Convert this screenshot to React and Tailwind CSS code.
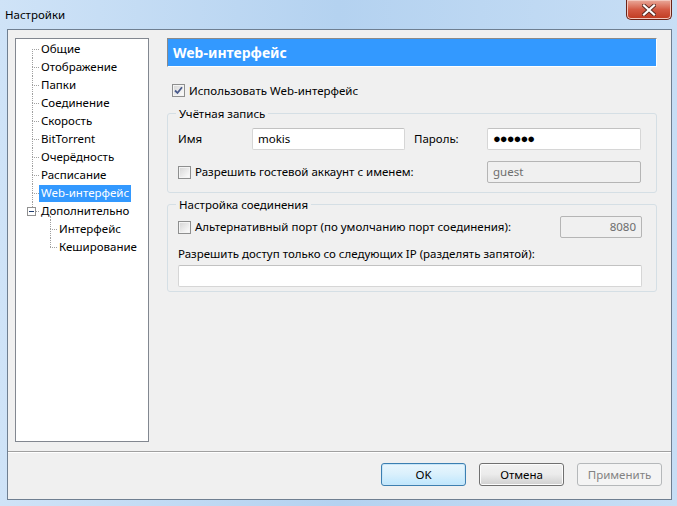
import React from "react";

const FONT = { fontFamily: '"Noto Sans", "Open Sans", sans-serif' };

function CheckBox({ checked }) {
  return (
    <div className="w-[13px] h-[13px] border border-[#8e8f8f] bg-[#f4f4f4] p-[1px] shrink-0">
      <div className="w-full h-full bg-gradient-to-br from-[#d8d8d8] to-[#fbfbfb] flex items-center justify-center">
        {checked && (
          <svg width="9" height="9" viewBox="0 0 9 9">
            <path d="M1 4.5 L3.5 7 L8 1.2" fill="none" stroke="#4a5b8c" strokeWidth="1.8" />
          </svg>
        )}
      </div>
    </div>
  );
}

function TextInput({ value, disabled, right, className = "", password }) {
  return (
    <div
      className={
        "h-[22px] border rounded-[2px] flex items-center px-[5px] text-[11.5px] " +
        (disabled
          ? "bg-[#f0f0f0] border-[#b5b5b5] text-[#6d6d6d] "
          : "bg-white border-[#d6d6d6] border-t-[#c2c2c2] text-black ") +
        (right ? "justify-end " : "") +
        className
      }
    >
      {password ? <span className="tracking-[-1px] text-[13px]">●●●●●●</span> : value}
    </div>
  );
}

function Button({ children, kind }) {
  const cls =
    kind === "default"
      ? "border-[#3c7fb1] bg-gradient-to-b from-[#eaf6fd] via-[#d9f0fc] to-[#bee6fd] text-black shadow-[0_0_0_1px_#c8e6f8_inset]"
      : kind === "disabled"
      ? "border-[#b5b8ba] bg-[#f4f4f4] text-[#838383]"
      : "border-[#707070] bg-gradient-to-b from-[#f2f2f2] via-[#ebebeb] to-[#cfcfcf] text-black shadow-[0_0_0_1px_#fcfcfc_inset]";
  return (
    <div className={"w-[85px] h-[23px] border rounded-[3px] flex items-center justify-center text-[11.5px] " + cls}>
      {children}
    </div>
  );
}

const dot = "border-[#a0a0a0] border-dotted";

function TreeRow({ label, level = 0, first, last, selected, expander }) {
  return (
    <div className="flex h-[18px] items-center">
      <div className={level === 0 ? "w-[16px] shrink-0" : "w-[34px] shrink-0"} />
      <div className="relative w-[7px] h-[18px] shrink-0">
        {!first && <div className={"absolute left-0 top-0 h-[9px] border-l " + dot} />}
        {!expander && !last && <div className={"absolute left-0 top-[9px] h-[9px] border-l " + dot} />}
        <div className={"absolute left-0 top-[9px] w-[7px] border-t " + dot} />
        {expander && (
          <div className="absolute left-[-5px] top-[5px] w-[9px] h-[9px] border border-[#919191] bg-white flex items-center justify-center">
            <div className="w-[5px] h-[1px] bg-[#1e3c6e]" />
          </div>
        )}
        {expander && <div className={"absolute left-[18px] top-[14px] h-[4px] border-l " + dot} />}
      </div>
      <div
        className={
          "px-[2px] h-[17px] flex items-center text-[11.5px] whitespace-nowrap " +
          (selected ? "bg-[#3399ff] text-white" : "text-black")
        }
      >
        {label}
      </div>
    </div>
  );
}

export default function App() {
  return (
    <div
      style={FONT}
      className="w-[677px] h-[506px] flex flex-col bg-gradient-to-r from-[#cfe3f7] via-[#b4d2f0] to-[#c7def5] overflow-hidden"
    >
      {/* Title bar */}
      <div className="h-[29px] flex items-start justify-between shrink-0">
        <div className="pl-[5px] pt-[6px] text-[11.5px] text-black leading-[18px]">Настройки</div>
        <div className="mr-[5px] w-[46px] h-[20px] rounded-b-[5px] border border-t-0 border-[#6b2418] bg-gradient-to-b from-[#e9a99b] via-[#d45a44] to-[#c0391f] flex items-center justify-center shadow-[0_0_0_1px_#f3c7bd_inset]">
          <svg width="14" height="12" viewBox="0 0 14 12">
            <path d="M2 1.5 L12 10.5 M12 1.5 L2 10.5" stroke="#5a2a22" strokeWidth="4" strokeLinecap="square" />
            <path d="M2 1.5 L12 10.5 M12 1.5 L2 10.5" stroke="#ffffff" strokeWidth="2.2" strokeLinecap="square" />
          </svg>
        </div>
      </div>

      {/* Client area */}
      <div className="ml-[7px] mr-[5px] h-[471px] border border-[#6f7f91] bg-[#f0f0f0] flex flex-col">
        <div className="flex pl-[7px] pt-[8px]">
          {/* Tree */}
          <div className="w-[134px] h-[404px] border border-[#828790] bg-white pt-[1px] shrink-0">
            <TreeRow label="Общие" first />
            <TreeRow label="Отображение" />
            <TreeRow label="Папки" />
            <TreeRow label="Соединение" />
            <TreeRow label="Скорость" />
            <TreeRow label="BitTorrent" />
            <TreeRow label="Очерёдность" />
            <TreeRow label="Расписание" />
            <TreeRow label="Web-интерфейс" selected />
            <TreeRow label="Дополнительно" expander />
            <TreeRow label="Интерфейс" level={1} />
            <TreeRow label="Кеширование" level={1} last />
          </div>

          {/* Right panel */}
          <div className="ml-[18px] w-[490px] flex flex-col">
            <div className="h-[29px] bg-[#3399ff] border-t border-l border-[#8a8a8a] border-b border-r border-b-white border-r-white flex items-center pl-[5px] text-white font-bold text-[14px]">
              Web-интерфейс
            </div>

            <div className="flex items-center mt-[17px] pl-[5px] h-[13px]">
              <CheckBox checked />
              <span className="ml-[4px] text-[11.5px] text-black">Использовать Web-интерфейс</span>
            </div>

            <fieldset className="mt-[9px] border border-[#d5dfe5] rounded-[3px] pl-[10px] pr-[15px] pb-[9px]">
              <legend className="-ml-[2px] px-[3px] text-[11.5px] leading-[15px] text-black">Учётная запись</legend>
              <div className="flex items-center mt-[7px]">
                <span className="w-[74px] text-[11.5px]">Имя</span>
                <TextInput value="mokis" className="w-[153px]" />
                <span className="ml-[9px] w-[73px] text-[11.5px]">Пароль:</span>
                <TextInput password className="w-[154px]" />
              </div>
              <div className="flex items-center mt-[11px]">
                <div className="flex items-center flex-1">
                  <CheckBox />
                  <span className="ml-[4px] text-[11.5px]">Разрешить гостевой аккаунт с именем:</span>
                </div>
                <TextInput value="guest" disabled className="w-[154px]" />
              </div>
            </fieldset>

            <fieldset className="mt-[4px] border border-[#d5dfe5] rounded-[3px] pl-[10px] pr-[14px] pb-[4px]">
              <legend className="-ml-[2px] px-[3px] text-[11.5px] leading-[15px] text-black">Настройка соединения</legend>
              <div className="flex items-center mt-[4px]">
                <div className="flex items-center flex-1">
                  <CheckBox />
                  <span className="ml-[4px] text-[11.5px]">Альтернативный порт (по умолчанию порт соединения):</span>
                </div>
                <TextInput value="8080" disabled right className="w-[82px]" />
              </div>
              <div className="mt-[8px] text-[11.5px] leading-[16px]">
                Разрешить доступ только со следующих IP (разделять запятой):
              </div>
              <TextInput value="" className="mt-[3px] w-full" />
            </fieldset>
          </div>
        </div>

        {/* Separator */}
        <div className="mt-[9px] h-[2px] border-t border-[#a0a0a0] border-b border-b-white" />

        {/* Buttons */}
        <div className="flex justify-end gap-[13px] pr-[9px] mt-[10px]">
          <Button kind="default">OK</Button>
          <Button>Отмена</Button>
          <Button kind="disabled">Применить</Button>
        </div>
      </div>
    </div>
  );
}
